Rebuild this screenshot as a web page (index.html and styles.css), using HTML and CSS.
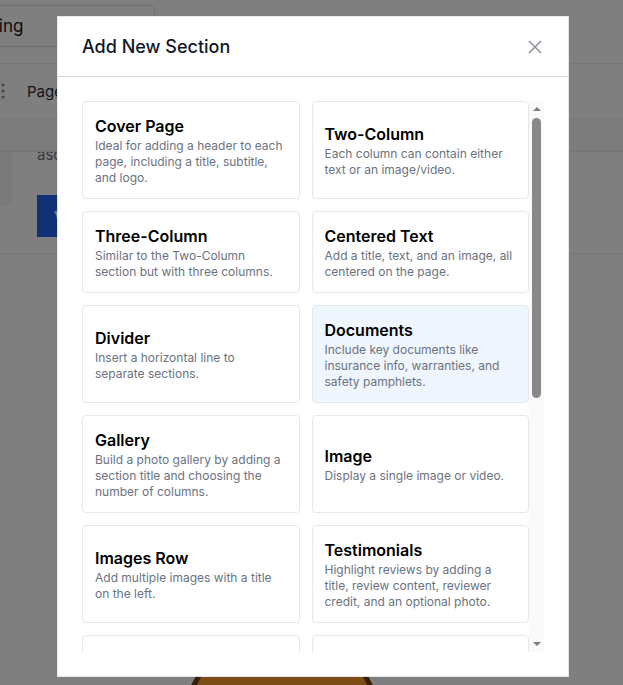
FILE: index.html
```html
<!DOCTYPE html>
<html lang="en">
<head>
<meta charset="utf-8">
<title>Add New Section</title>
<link rel="stylesheet" href="styles.css">
</head>
<body>
<div class="page">
  <div class="topbar">
    <div class="search">Building</div>
  </div>
  <div class="listrow">
    <svg class="handle" width="4" height="16" viewBox="0 0 4 16"><circle cx="2" cy="2" r="1.5"/><circle cx="2" cy="8" r="1.5"/><circle cx="2" cy="14" r="1.5"/></svg>
    <span class="listlabel">Pages</span>
  </div>
  <div class="band"></div>
  <div class="content">
    <div class="sidecard"></div>
    <div class="contentcol">
      <div class="contenttext">ascending order</div>
      <div class="bluebtn">View</div>
    </div>
  </div>
  <div class="photo-wrap"><div class="photo"></div></div>
</div>

<div class="overlay">
  <div class="modal">
    <div class="modal-header">
      <h2 class="modal-title">Add New Section</h2>
      <svg class="close" width="16" height="16" viewBox="0 0 16 16"><path d="M2 2 L14 14 M14 2 L2 14"/></svg>
    </div>
    <div class="modal-body">
      <div class="scroller">
        <div class="viewport">
          <div class="grid">
            <div class="card"><div class="card-title">Cover Page</div><div class="card-desc">Ideal for adding a header to each page, including a title, subtitle, and logo.</div></div>
            <div class="card"><div class="card-title">Two-Column</div><div class="card-desc">Each column can contain either text or an image/video.</div></div>
            <div class="card"><div class="card-title">Three-Column</div><div class="card-desc">Similar to the Two-Column section but with three columns.</div></div>
            <div class="card"><div class="card-title">Centered Text</div><div class="card-desc">Add a title, text, and an image, all centered on the page.</div></div>
            <div class="card"><div class="card-title">Divider</div><div class="card-desc">Insert a horizontal line to separate sections.</div></div>
            <div class="card card-active"><div class="card-title">Documents</div><div class="card-desc">Include key documents like insurance info, warranties, and safety pamphlets.</div></div>
            <div class="card"><div class="card-title">Gallery</div><div class="card-desc">Build a photo gallery by adding a section title and choosing the number of columns.</div></div>
            <div class="card"><div class="card-title">Image</div><div class="card-desc">Display a single image or video.</div></div>
            <div class="card"><div class="card-title">Images Row</div><div class="card-desc">Add multiple images with a title on the left.</div></div>
            <div class="card"><div class="card-title">Testimonials</div><div class="card-desc">Highlight reviews by adding a title, review content, reviewer credit, and an optional photo.</div></div>
            <div class="card"><div class="card-title">Text</div><div class="card-desc">Add a section title and a block of rich text, such as paragraphs and bullet lists.</div></div>
            <div class="card"><div class="card-title">Video</div><div class="card-desc">Embed a video from YouTube or Vimeo.</div></div>
            <div class="card"><div class="card-title">FAQ</div><div class="card-desc">List common questions together with their answers.</div></div>
            <div class="card"><div class="card-title">Contacts</div><div class="card-desc">Show names, phone numbers and email addresses.</div></div>
          </div>
        </div>
        <div class="scrollbar">
          <div class="sb-btn"><span class="arrow-up"></span></div>
          <div class="sb-track"><div class="sb-thumb"></div></div>
          <div class="sb-btn"><span class="arrow-down"></span></div>
        </div>
      </div>
    </div>
  </div>
</div>
</body>
</html>
```
FILE: styles.css
```css
* { box-sizing: border-box; }
html, body { margin: 0; padding: 0; height: 100%; }
body {
  font-family: Inter, "Noto Sans", Arial, sans-serif;
  background: #ffffff;
  color: #111827;
  overflow: hidden;
}

/* background page */
.page { height: 685px; overflow: hidden; }
.topbar { height: 64px; border-bottom: 1px solid #ececec; padding-top: 5px; }
.search {
  margin-left: -54px;
  width: 209px;
  height: 42px;
  border: 1px solid #dcdcdc;
  border-radius: 6px;
  padding: 0 12px;
  display: flex;
  align-items: center;
  font-size: 17px;
  color: #111827;
}
.listrow {
  height: 55px;
  border-bottom: 1px solid #ececec;
  display: flex;
  align-items: center;
  padding-left: 1px;
}
.handle { fill: #8a8a8a; }
.listlabel { margin-left: 22px; font-size: 15px; color: #1f2937; }
.band { height: 33px; background: #f6f9f6; border-bottom: 1px solid #ececec; }
.content {
  height: 102px;
  border-bottom: 1px solid #ececec;
  display: flex;
  overflow: hidden;
}
.sidecard {
  width: 12px;
  height: 54px;
  background: #f4f4f4;
  border-bottom-right-radius: 8px;
}
.contentcol { margin-left: 25px; }
.contenttext { margin-top: -7px; font-size: 15px; line-height: 20px; color: #6b7280; }
.bluebtn {
  margin-top: 30px;
  width: 120px;
  height: 42px;
  background: #2563eb;
  color: #fff;
  font-size: 15px;
  font-weight: 600;
  display: flex;
  align-items: center;
  padding-left: 17px;
}
.photo-wrap { padding-left: 182px; margin-top: 373px; }
.photo {
  width: 200px;
  height: 200px;
  border-radius: 50%;
  background: #f89a2c;
  border: 5px solid #6e3f0c;
}

/* overlay + modal */
.overlay {
  position: fixed;
  inset: 0;
  background: rgba(0, 0, 0, 0.5);
  padding: 16px 0 0 57px;
}
.modal {
  width: 512px;
  height: 661px;
  background: #ffffff;
  border: 1px solid #e5e7eb;
  display: flex;
  flex-direction: column;
}
.modal-header {
  height: 60px;
  flex: none;
  border-bottom: 1px solid #d4d4dc;
  display: flex;
  align-items: center;
  justify-content: space-between;
  padding: 0 25px 0 24px;
}
.modal-title {
  margin: 0;
  font-size: 18px;
  font-weight: 500;
  color: #111827;
}
.close { stroke: #8f949c; stroke-width: 1.6; fill: none; }
.modal-body { flex: 1; padding: 24px; }
.scroller { height: 551px; display: flex; }
.viewport { flex: 1; min-width: 0; overflow: hidden; }
.scrollbar {
  width: 15px;
  flex: none;
  background: #fafafa;
  display: flex;
  flex-direction: column;
}
.sb-btn {
  height: 16px;
  flex: none;
  display: flex;
  align-items: center;
  justify-content: center;
}
.arrow-up, .arrow-down {
  width: 0;
  height: 0;
  border-left: 4px solid transparent;
  border-right: 4px solid transparent;
}
.arrow-up { border-bottom: 4px solid #7d7d7d; }
.arrow-down { border-top: 4px solid #7d7d7d; }
.sb-track { flex: 1; padding: 1px 3px 0; }
.sb-thumb { height: 280px; background: #888888; border-radius: 5px; }
.grid {
  display: grid;
  grid-template-columns: 1fr 1fr;
  gap: 12px;
}
.card {
  border: 1px solid #e5e7eb;
  border-radius: 4px;
  padding: 12px;
  display: flex;
  flex-direction: column;
  justify-content: center;
  background: #fff;
}
.card-active { background: #eff6ff; }
.card-title { font-size: 16px; line-height: 24px; font-weight: 600; color: #000; }
.card-desc { font-size: 12px; line-height: 16px; color: #6b7280; }
```
